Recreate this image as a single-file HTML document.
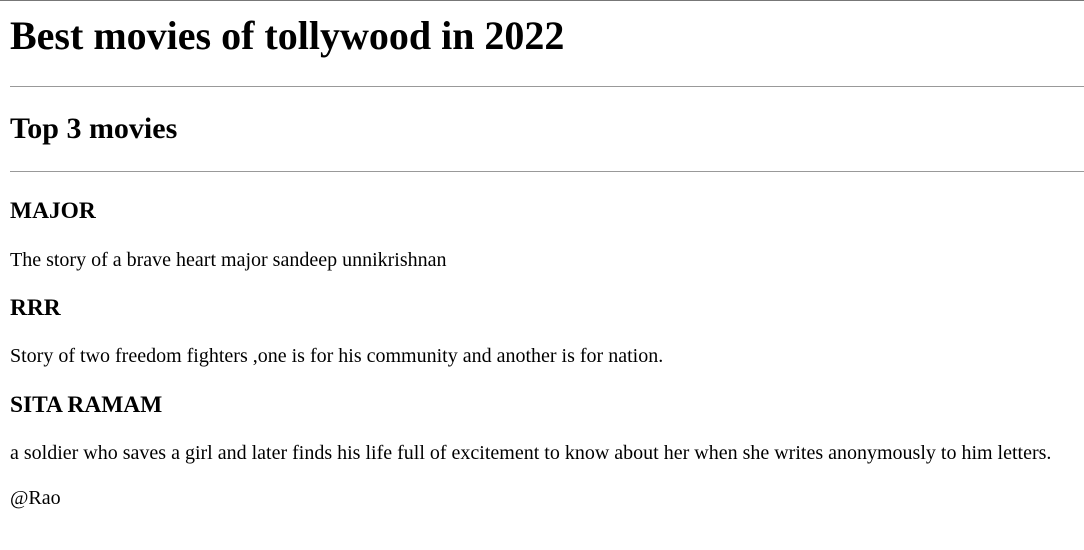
<!DOCTYPE html>
<html><head><style>
html{zoom:1.25;border-top:0.8px solid #777;}
body{font-family:"Liberation Serif",serif;margin:8px;margin-top:0;padding-top:0;}
h1{margin-top:9px;}
hr{border:0;border-top:0.8px solid #999;margin:5.4px -8px 12.1px 0;}
hr.b{padding-bottom:2.4px;}
p.r{margin-top:17.8px;}
</style></head><body>
<h1>Best movies of tollywood in 2022</h1>
<hr>
<h2>Top 3 movies</h2>
<hr class="b">
<h3>MAJOR</h3>
<p>The story of a brave heart major sandeep unnikrishnan</p>
<h3>RRR</h3>
<p>Story of two freedom fighters ,one is for his community and another is for nation.</p>
<h3>SITA RAMAM</h3>
<p>a soldier who saves a girl and later finds his life full of excitement to know about her when she writes anonymously to him letters.</p>
<p class="r">@Rao</p>
</body></html>
